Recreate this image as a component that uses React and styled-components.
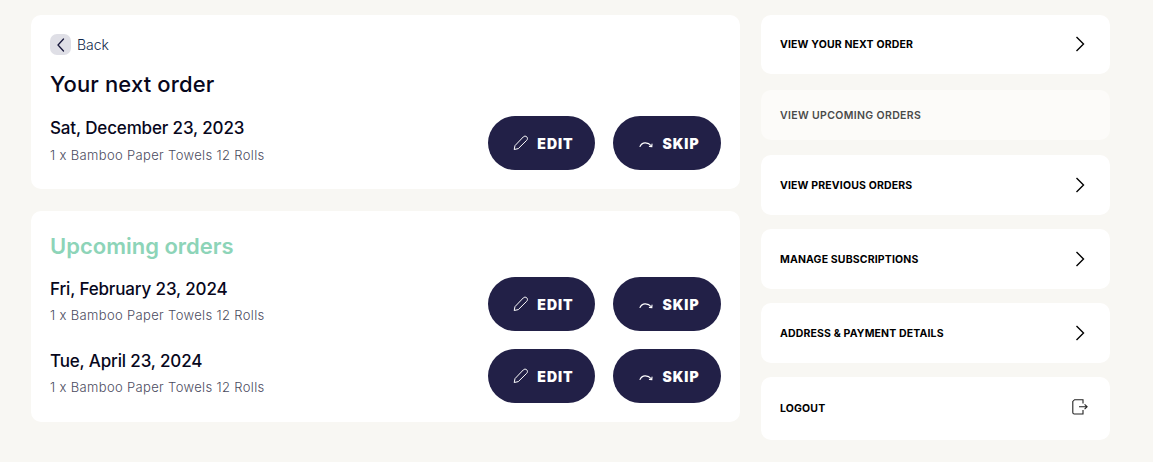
import React from 'react';
import styled, { createGlobalStyle } from 'styled-components';

const Global = createGlobalStyle`
  html, body {
    margin: 0;
    padding: 0;
    background: #f8f7f3;
  }
  * {
    box-sizing: border-box;
  }
`;

const orders = [
  { date: 'Fri, February 23, 2024', item: '1 x Bamboo Paper Towels 12 Rolls' },
  { date: 'Tue, April 23, 2024', item: '1 x Bamboo Paper Towels 12 Rolls' },
];

const links = [
  { label: 'VIEW YOUR NEXT ORDER', height: 59, icon: 'chevron', gap: 16 },
  { label: 'VIEW UPCOMING ORDERS', height: 50, muted: true, gap: 15 },
  { label: 'VIEW PREVIOUS ORDERS', height: 60, icon: 'chevron', gap: 14 },
  { label: 'MANAGE SUBSCRIPTIONS', height: 60, icon: 'chevron', gap: 14 },
  { label: 'ADDRESS & PAYMENT DETAILS', height: 60, icon: 'chevron', gap: 14 },
  { label: 'LOGOUT', height: 63, icon: 'logout', gap: 0 },
];

const PencilIcon = () => (
  <svg width="16" height="16" viewBox="0 0 16 16" fill="none" stroke="#fff" strokeWidth="1" strokeLinejoin="round">
    <path d="M2.2 14.5 L3 10.6 L11.3 1.9 C12.3 0.9 13.9 0.9 14.8 1.9 C15.7 2.8 15.7 4.3 14.7 5.3 L6.3 13.6 Z" />
  </svg>
);

const SkipIcon = () => (
  <svg width="16" height="16" viewBox="0 0 16 16" fill="none" stroke="#fff" strokeWidth="1.1" strokeLinecap="round">
    <path d="M3 11.5 C5 7 10.5 6.5 14.6 11" />
    <path d="M15 9 L14.8 11.6 L12.4 11.4" />
  </svg>
);

const BackIcon = () => (
  <svg width="10" height="14" viewBox="0 0 10 14" fill="none" stroke="#16163a" strokeWidth="1.3" strokeLinecap="round">
    <path d="M7.5 1 L2 7 L7.5 13" />
  </svg>
);

const ChevronIcon = () => (
  <svg width="10" height="16" viewBox="0 0 10 16" fill="none" stroke="#000" strokeWidth="1.4">
    <path d="M1.5 1 L8.5 8 L1.5 15" />
  </svg>
);

const LogoutIcon = () => (
  <svg width="16" height="16" viewBox="0 0 16 16" fill="none" stroke="#222" strokeWidth="1.1">
    <path d="M11 4.5 V0.7 H2.6 L0.8 2.4 V13.4 C0.8 14.4 1.3 15 2.3 15 H11 V11" />
    <path d="M7 7.7 H15 M12.6 5.3 L15.1 7.7 L12.6 10.1" />
  </svg>
);

function OrderRow({ date, item, tall }) {
  return (
    <Row>
      <div>
        <OrderDate>{date}</OrderDate>
        <Item $tall={tall}>{item}</Item>
      </div>
      <Actions>
        <ActionButton $width={107}>
          <PencilIcon />
          EDIT
        </ActionButton>
        <ActionButton $width={108}>
          <SkipIcon />
          SKIP
        </ActionButton>
      </Actions>
    </Row>
  );
}

function App() {
  return (
    <>
      <Global />
      <Page>
        <Main>
          <TopCard>
            <BackLink>
              <BackBadge>
                <BackIcon />
              </BackBadge>
              Back
            </BackLink>
            <Title>Your next order</Title>
            <OrderRow date="Sat, December 23, 2023" item="1 x Bamboo Paper Towels 12 Rolls" tall />
          </TopCard>
          <UpcomingCard>
            <UpcomingTitle>Upcoming orders</UpcomingTitle>
            <RowList>
              {orders.map(order => (
                <OrderRow key={order.date} date={order.date} item={order.item} />
              ))}
            </RowList>
          </UpcomingCard>
        </Main>
        <Side>
          {links.map(link => (
            <SideLink key={link.label} $height={link.height} $muted={link.muted} $gap={link.gap}>
              {link.label}
              {link.icon === 'chevron' && (
                <ChevronSlot>
                  <ChevronIcon />
                </ChevronSlot>
              )}
              {link.icon === 'logout' && (
                <LogoutSlot>
                  <LogoutIcon />
                </LogoutSlot>
              )}
            </SideLink>
          ))}
        </Side>
      </Page>
    </>
  );
}

const Page = styled.div`
  display: flex;
  align-items: flex-start;
  gap: 21px;
  width: 1153px;
  height: 462px;
  padding: 15px 0 0 31px;
  font-family: Inter, 'Liberation Sans', sans-serif;
  overflow: hidden;
`;

const Main = styled.div`
  display: flex;
  flex-direction: column;
  gap: 22px;
  width: 709px;
`;

const Card = styled.section`
  background: #fff;
  border-radius: 10px;
  padding-left: 19px;
  padding-right: 19px;
`;

const TopCard = styled(Card)`
  height: 174px;
  padding-top: 19px;
`;

const UpcomingCard = styled(Card)`
  height: 211px;
  padding-top: 21px;
`;

const BackLink = styled.div`
  display: flex;
  align-items: center;
  gap: 6px;
  height: 21px;
  font-size: 14px;
  font-weight: 300;
  color: #10284a;
`;

const BackBadge = styled.span`
  display: flex;
  align-items: center;
  justify-content: center;
  width: 21px;
  height: 21px;
  border-radius: 7px;
  background: #dfdfe6;
`;

const Title = styled.h1`
  margin: 15px 0 18px;
  font-size: 22px;
  line-height: 28px;
  font-weight: 500;
  letter-spacing: 0.14px;
  color: #07071c;
`;

const UpcomingTitle = styled.h2`
  margin: 0;
  font-size: 22px;
  line-height: 28px;
  font-weight: 600;
  color: #8dd4b8;
`;

const RowList = styled.div`
  display: flex;
  flex-direction: column;
  gap: 18px;
  margin-top: 17px;
`;

const Row = styled.div`
  display: flex;
  align-items: flex-start;
  justify-content: space-between;
`;

const OrderDate = styled.div`
  margin-top: 1px;
  font-size: 17px;
  line-height: 22px;
  font-weight: 550;
  letter-spacing: -0.15px;
  color: #07071c;
`;

const Item = styled.div`
  margin-top: ${props => (props.$tall ? '8px' : '7px')};
  font-size: 13px;
  line-height: 17px;
  font-weight: 300;
  letter-spacing: 0.35px;
  color: #4b4b60;
`;

const Actions = styled.div`
  display: flex;
  gap: 18px;
`;

const ActionButton = styled.button`
  display: flex;
  align-items: center;
  justify-content: center;
  gap: 9px;
  width: ${props => props.$width}px;
  height: 54px;
  border: 0;
  border-radius: 27px;
  padding: 0 0 0 3px;
  background: #222047;
  color: #fff;
  font-family: inherit;
  font-size: 14px;
  font-weight: 900;
  letter-spacing: 1px;
`;

const Side = styled.nav`
  display: flex;
  flex-direction: column;
  width: 349px;
`;

const SideLink = styled.div`
  display: flex;
  align-items: center;
  justify-content: space-between;
  height: ${props => props.$height}px;
  margin-bottom: ${props => props.$gap}px;
  padding: 0 21px 0 19px;
  border-radius: 10px;
  background: ${props => (props.$muted ? '#fcfbf9' : '#fff')};
  color: ${props => (props.$muted ? '#4a4a4a' : '#000')};
  font-size: 10.5px;
  font-weight: ${props => (props.$muted ? 600 : 700)};
  letter-spacing: ${props => (props.$muted ? '0.35px' : '0.15px')};
`;

const ChevronSlot = styled.span`
  display: flex;
  margin-right: 4px;
  margin-top: -1px;
`;

const LogoutSlot = styled.span`
  display: flex;
  margin-top: -4px;
  margin-right: 1px;
`;

export default App;
